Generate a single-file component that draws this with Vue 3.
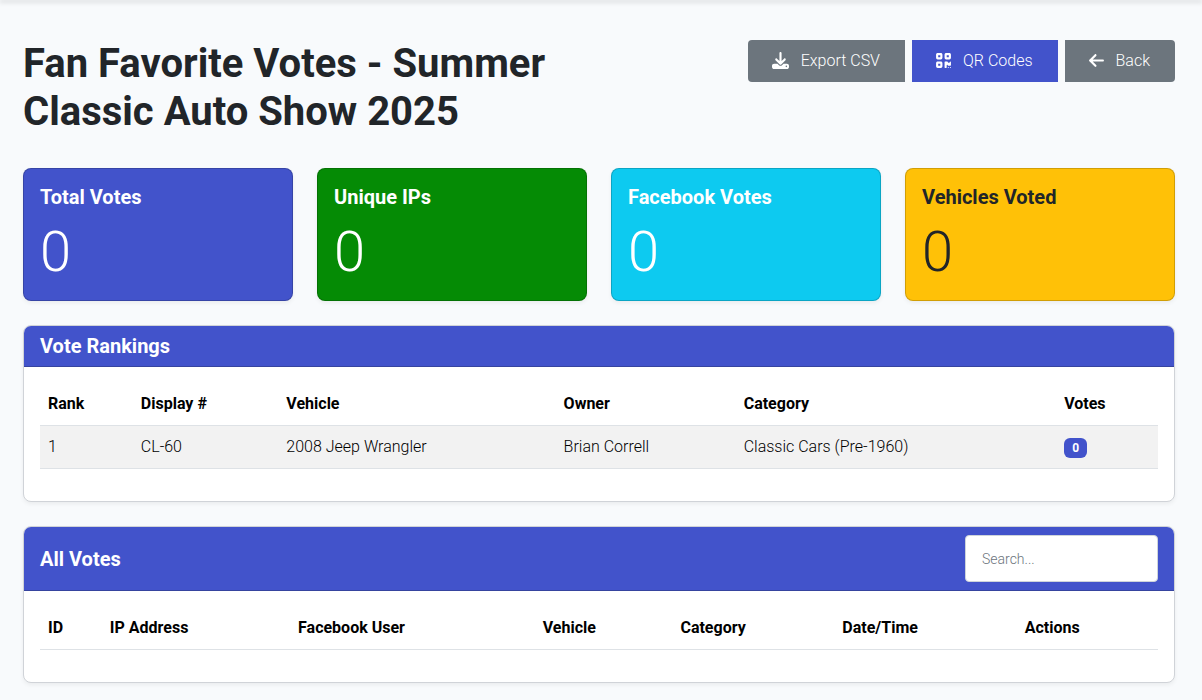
<template>
  <div class="topbar"></div>
  <main class="page">
    <header class="page-header">
      <h1>Fan Favorite Votes - Summer Classic Auto Show 2025</h1>
      <div class="actions">
        <button type="button" class="btn btn-secondary" @click="exportCsv">
          <svg class="icon" viewBox="0 0 512 512" aria-hidden="true">
            <path
              d="M288 32c0-17.7-14.3-32-32-32s-32 14.3-32 32V274.7l-73.4-73.4c-12.5-12.5-32.8-12.5-45.3 0s-12.5 32.8 0 45.3l128 128c12.5 12.5 32.8 12.5 45.3 0l128-128c12.5-12.5 12.5-32.8 0-45.3s-32.8-12.5-45.3 0L288 274.7V32zM64 352c-35.3 0-64 28.7-64 64v32c0 35.3 28.7 64 64 64H448c35.3 0 64-28.7 64-64V416c0-35.3-28.7-64-64-64H346.5l-45.3 45.3c-25 25-65.5 25-90.5 0L165.5 352H64zm368 56a24 24 0 1 1 0 48 24 24 0 1 1 0-48z"
            />
          </svg>
          Export CSV
        </button>
        <a href="#qr-codes" class="btn btn-primary">
          <svg class="icon icon-narrow" viewBox="0 0 448 512" aria-hidden="true">
            <path
              d="M0 80C0 53.5 21.5 32 48 32h96c26.5 0 48 21.5 48 48v96c0 26.5-21.5 48-48 48H48c-26.5 0-48-21.5-48-48V80zM64 96v64h64V96H64zM0 336c0-26.5 21.5-48 48-48h96c26.5 0 48 21.5 48 48v96c0 26.5-21.5 48-48 48H48c-26.5 0-48-21.5-48-48V336zm64 16v64h64V352H64zM304 32h96c26.5 0 48 21.5 48 48v96c0 26.5-21.5 48-48 48H304c-26.5 0-48-21.5-48-48V80c0-26.5 21.5-48 48-48zm80 64H320v64h64V96zM256 304c0-8.8 7.2-16 16-16h64c8.8 0 16 7.2 16 16s7.2 16 16 16h32c8.8 0 16-7.2 16-16s7.2-16 16-16s16 7.2 16 16v96c0 8.8-7.2 16-16 16H368c-8.8 0-16-7.2-16-16s-7.2-16-16-16s-16 7.2-16 16v64c0 8.8-7.2 16-16 16H272c-8.8 0-16-7.2-16-16V304zM368 480a16 16 0 1 1 0-32 16 16 0 1 1 0 32zm64 0a16 16 0 1 1 0-32 16 16 0 1 1 0 32z"
            />
          </svg>
          QR Codes
        </a>
        <a href="#back" class="btn btn-secondary">
          <svg class="icon icon-narrow" viewBox="0 0 448 512" aria-hidden="true">
            <path
              d="M9.4 233.4c-12.5 12.5-12.5 32.8 0 45.3l160 160c12.5 12.5 32.8 12.5 45.3 0s12.5-32.8 0-45.3L109.2 288 416 288c17.7 0 32-14.3 32-32s-14.3-32-32-32l-306.7 0L214.6 118.6c12.5-12.5 12.5-32.8 0-45.3s-32.8-12.5-45.3 0l-160 160z"
            />
          </svg>
          Back
        </a>
      </div>
    </header>

    <section class="stats">
      <div v-for="stat in stats" :key="stat.label" class="stat" :class="stat.type">
        <h2>{{ stat.label }}</h2>
        <p>{{ stat.value }}</p>
      </div>
    </section>

    <section class="card">
      <div class="card-header">
        <h2>Vote Rankings</h2>
      </div>
      <div class="card-body">
        <table>
          <thead>
            <tr>
              <th v-for="col in rankingColumns" :key="col" scope="col">{{ col }}</th>
            </tr>
          </thead>
          <tbody>
            <tr v-for="row in rankings" :key="row.rank">
              <td>{{ row.rank }}</td>
              <td>{{ row.display }}</td>
              <td>{{ row.vehicle }}</td>
              <td>{{ row.owner }}</td>
              <td>{{ row.category }}</td>
              <td><span class="badge">{{ row.votes }}</span></td>
            </tr>
          </tbody>
        </table>
      </div>
    </section>

    <section class="card">
      <div class="card-header">
        <h2>All Votes</h2>
        <input v-model="search" type="text" placeholder="Search..." aria-label="Search votes" />
      </div>
      <div class="card-body">
        <table>
          <thead>
            <tr>
              <th v-for="col in voteColumns" :key="col" scope="col">{{ col }}</th>
            </tr>
          </thead>
          <tbody>
            <tr v-for="vote in filteredVotes" :key="vote[0]">
              <td v-for="(cell, i) in vote" :key="i">{{ cell }}</td>
            </tr>
          </tbody>
        </table>
      </div>
    </section>
  </main>
</template>

<script setup>
import { computed, ref } from "vue";

const stats = [
  { label: "Total Votes", value: 0, type: "primary" },
  { label: "Unique IPs", value: 0, type: "success" },
  { label: "Facebook Votes", value: 0, type: "info" },
  { label: "Vehicles Voted", value: 0, type: "warning" },
];

const rankingColumns = ["Rank", "Display #", "Vehicle", "Owner", "Category", "Votes"];
const rankings = [
  {
    rank: 1,
    display: "CL-60",
    vehicle: "2008 Jeep Wrangler",
    owner: "Brian Correll",
    category: "Classic Cars (Pre-1960)",
    votes: 0,
  },
];

const voteColumns = ["ID", "IP Address", "Facebook User", "Vehicle", "Category", "Date/Time", "Actions"];
const votes = ref([]);
const search = ref("");

const filteredVotes = computed(() =>
  votes.value.filter((vote) => vote.join(" ").toLowerCase().includes(search.value.toLowerCase()))
);

function exportCsv() {
  const lines = [voteColumns, ...votes.value].map((line) => line.join(","));
  const link = document.createElement("a");
  link.href = URL.createObjectURL(new Blob([lines.join("\n")], { type: "text/csv" }));
  link.download = "votes.csv";
  link.click();
}
</script>

<style>
body {
  margin: 0;
  background-color: #f8fafc;
}
</style>

<style scoped>
* {
  box-sizing: border-box;
}

.topbar {
  height: 0;
  box-shadow: 0 1px 5px 1px rgba(0, 0, 0, 0.2);
}

.page {
  padding: 40px 27px 18px 23px;
  color: #212529;
  font-family: Roboto, sans-serif;
  font-size: 16px;
  font-weight: 300;
  line-height: 26px;
}

h1,
h2,
p {
  margin: 0;
}

h1 {
  font-size: 40px;
  font-weight: 700;
  line-height: 48px;
}

h2 {
  font-size: 20px;
  font-weight: 700;
  line-height: 24px;
}

.page-header {
  display: grid;
  grid-template-columns: 1fr 1fr;
  gap: 24px;
  align-items: start;
  margin-bottom: 32px;
}

.actions {
  display: flex;
  justify-content: flex-end;
  gap: 7px;
}

.btn {
  display: flex;
  align-items: center;
  gap: 12px;
  height: 42px;
  padding: 0 25px 0 24px;
  border: 0;
  color: #fff;
  font: inherit;
  white-space: nowrap;
  text-decoration: none;
  cursor: pointer;
}

.btn:first-child {
  border-radius: 4px 0 0 4px;
}

.btn:last-child {
  border-radius: 0 4px 4px 0;
}

.btn-primary {
  background-color: #4253cb;
}

.btn-secondary {
  background-color: #6c757d;
}

.icon {
  width: 17px;
  height: 17px;
  margin-bottom: 2px;
  fill: currentColor;
}

.icon-narrow {
  width: 15px;
}

.stats {
  display: grid;
  grid-template-columns: repeat(4, 1fr);
  gap: 24px;
}

.stat {
  padding: 16px 16px 14px;
  border: 1px solid rgba(0, 0, 0, 0.18);
  border-radius: 8px;
  color: #fff;
  box-shadow: 0 2px 4px rgba(0, 0, 0, 0.06);
}

.stat p {
  margin-top: 10px;
  font-size: 56px;
  line-height: 67px;
}

.primary {
  background-color: #4253cb;
}

.success {
  background-color: #058b05;
}

.info {
  background-color: #0dcaf0;
}

.warning {
  background-color: #ffc107;
  color: #212529;
}

.card {
  margin-top: 24px;
  border: 1px solid #d0d3d8;
  border-radius: 8px;
  background-color: #fff;
  box-shadow: 0 2px 4px rgba(0, 0, 0, 0.06);
}

.card-header {
  display: flex;
  align-items: center;
  justify-content: space-between;
  padding: 8px 16px;
  border-bottom: 1px solid #36449f;
  border-radius: 7px 7px 0 0;
  background-color: #4253cb;
  color: #fff;
}

.card-header input {
  width: 193px;
  height: 47px;
  padding: 0 16px;
  border: 1px solid #ced4da;
  border-radius: 4px;
  background-color: #fff;
  color: #212529;
  font: inherit;
  font-size: 14px;
}

.card-header input::placeholder {
  color: #6c757d;
}

.card-body {
  padding: 16px;
}

table {
  width: 100%;
  margin-bottom: 16px;
  border-collapse: collapse;
  color: #000;
}

th,
td {
  padding: 8px;
  border-bottom: 1px solid #dee2e6;
  text-align: left;
}

th {
  font-weight: 700;
}

tbody tr:nth-child(odd) {
  background-color: #f2f2f2;
}

.badge {
  display: inline-block;
  padding: 4px 8px;
  border-radius: 6px;
  background-color: #4253cb;
  color: #fff;
  font-size: 12px;
  font-weight: 700;
  line-height: 12px;
  vertical-align: middle;
}
</style>
